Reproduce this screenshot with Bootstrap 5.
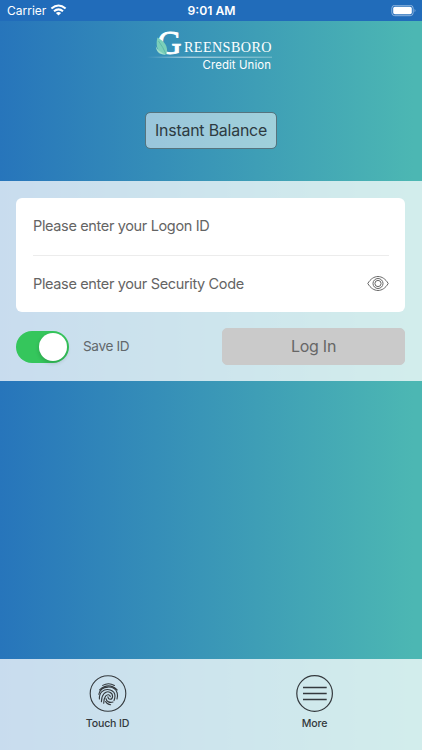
<!DOCTYPE html>
<html lang="en">
<head>
    <meta charset="UTF-8">
    <meta name="viewport" content="width=device-width, initial-scale=1.0">
    <title>Greensboro Credit Union</title>
    <!-- Bootstrap CSS -->
    <link href="https://cdn.jsdelivr.net/npm/bootstrap@5.3.0/dist/css/bootstrap.min.css" rel="stylesheet">
    <style>
        body {
            font-family: Inter, "Liberation Sans", sans-serif;
            background: linear-gradient(90deg, #2775bb 0%, #4cb7b3 98%);
            color: #3c4246;
            overflow: hidden;
        }

        svg {
            display: block;
            flex: none;
        }

        .status-bar {
            height: 21px;
            background: #216cba;
            font-size: 12px;
            line-height: 21px;
            padding: 0 6px 0 7px;
        }

        .status-side {
            flex: 1 1 0;
        }

        .clock {
            font-size: 12.2px;
        }

        .brand-header {
            height: 160px;
            padding-top: 1px;
        }

        .btn-balance {
            --bs-btn-color: #2d3a41;
            --bs-btn-bg: rgba(255, 255, 255, .5);
            --bs-btn-border-color: #56747e;
            --bs-btn-border-radius: 5px;
            width: 132px;
            height: 37px;
            padding: 0;
            margin-top: 41px;
            font-size: 15.9px;
            letter-spacing: -.2px;
            background-clip: padding-box;
        }

        .frost {
            background: rgba(255, 255, 255, .75);
        }

        .login-panel {
            height: 200px;
            padding: 16.5px 17px 16.5px 16px;
        }

        .field-box {
            height: 114px;
            border-radius: 6px;
            padding: 0 16px 0 17px;
            color: #646464;
            font-size: 14.5px;
            letter-spacing: -.35px;
        }

        .field-row {
            height: 57px;
        }

        .field-row + .field-row {
            border-top: 1px solid #ececec;
        }

        .save-switch {
            width: 53px;
            height: 32px;
            border-radius: 16px;
            padding: 2px;
            margin-top: 1px;
            background: #35c65c;
        }

        .save-knob {
            width: 28px;
            height: 28px;
            box-shadow: 0 2px 4px rgba(0, 0, 0, .18);
        }

        .save-label {
            margin-left: 14px;
            color: #62686c;
            font-size: 13.6px;
            letter-spacing: -.35px;
        }

        .btn-login {
            --bs-btn-disabled-color: #666;
            --bs-btn-disabled-bg: #cacaca;
            --bs-btn-disabled-border-color: #cacaca;
            --bs-btn-disabled-opacity: 1;
            --bs-btn-border-radius: 5px;
            width: 183px;
            height: 37px;
            padding: 0;
            font-size: 16px;
            letter-spacing: -.25px;
        }

        .tab-bar {
            height: 91px;
            padding: 16px 4px 0 4px;
        }

        .tab-item {
            color: #34393d;
            font-size: 10.6px;
            font-weight: 500;
            line-height: 14px;
            letter-spacing: -.15px;
        }

        .tab-item span {
            margin-top: 4px;
        }
    </style>
</head>
<body class="d-flex flex-column vh-100">
    <div class="status-bar d-flex text-white">
        <div class="status-side d-flex align-items-center">
            <span>Carrier</span>
            <svg class="ms-1" width="17" height="13" viewBox="0 0 17 13" fill="none" stroke="#fff" stroke-width="2.1">
                <path d="M1.4 4.5Q8.5-1.5 15.6 4.5M4 7.2Q8.5 3.6 13 7.2"/>
                <path d="M5.9 9Q8.5 7.2 11.1 9L8.5 11.6Z" fill="#fff" stroke="none"/>
            </svg>
        </div>
        <span class="clock fw-semibold">9:01 AM</span>
        <div class="status-side d-flex align-items-center justify-content-end">
            <svg width="26" height="12" viewBox="0 0 26 12">
                <rect x="1.8" y=".3" width="21.4" height="10.4" rx="3" fill="none" stroke="#8db4de"/>
                <rect x="3.2" y="1.8" width="18.6" height="7.4" rx="1.6" fill="#fff"/>
                <path d="M24.6 3.7Q26.2 5.5 24.6 7.3Z" fill="#8db4de"/>
            </svg>
        </div>
    </div>

    <header class="brand-header d-flex flex-column align-items-center">
        <svg width="130" height="49" viewBox="0 -8 130 49" fill="#fff">
            <defs>
                <linearGradient id="rule">
                    <stop offset="0" stop-color="#fff" stop-opacity="0"/>
                    <stop offset=".35" stop-color="#fff" stop-opacity=".75"/>
                    <stop offset="1" stop-color="#fff" stop-opacity=".35"/>
                </linearGradient>
            </defs>
            <text x="11.5" y="24" font-family="Liberation Serif, serif" font-size="33" textLength="24" lengthAdjust="spacingAndGlyphs" stroke="#fff" stroke-width=".9">G</text>
            <text x="38" y="22.3" font-family="Liberation Serif, serif" font-size="14.2" textLength="87.500" lengthAdjust="spacing">REENSBORO</text>
            <!-- leaf over the G -->
            <path d="M11.4 7.5C18 11 23 16.5 20.3 24.6C13 24 8.8 18 11.4 7.5Z" fill="#7bcfb9"/>
            <path d="M9.8 16C11.5 20 14 22 20 24.6C14 25 10.2 22 9.8 16Z" fill="#a2e0cb"/>
            <path d="M12.5 11Q17 17 20 24" fill="none" stroke="#4ba99f" stroke-width=".6"/>
            <rect x="1" y="26.7" width="125" height="1" fill="url(#rule)"/>
            <text x="56.5" y="38.9" font-family="Inter, sans-serif" font-size="11.4" textLength="68.5" lengthAdjust="spacing">Credit Union</text>
        </svg>
        <button type="button" class="btn btn-balance">Instant Balance</button>
    </header>

    <main class="login-panel frost">
        <div class="field-box bg-white">
            <div class="field-row d-flex align-items-center">Please enter your Logon ID</div>
            <div class="field-row d-flex align-items-center justify-content-between">
                <span>Please enter your Security Code</span>
                <svg width="22" height="18" viewBox="0 0 22 18" fill="none" stroke="#666">
                    <path d="M.8 8.5C6.2-.8 15.8-.8 21.2 8.5C15.8 17.8 6.2 17.8 .8 8.5Z"/>
                    <circle cx="11" cy="8.5" r="5"/>
                    <circle cx="11" cy="8.5" r="3.1"/>
                </svg>
            </div>
        </div>
        <div class="d-flex align-items-center mt-3">
            <div class="save-switch d-flex justify-content-end" role="switch" aria-checked="true">
                <span class="save-knob rounded-circle bg-white"></span>
            </div>
            <span class="save-label">Save ID</span>
            <button type="button" class="btn btn-login ms-auto" disabled>Log In</button>
        </div>
    </main>

    <nav class="tab-bar frost d-flex mt-auto">
        <div class="tab-item flex-fill w-50 d-flex flex-column align-items-center">
            <svg width="38" height="38" viewBox="0 0 38 38" fill="none" stroke="#34393d" stroke-width="1.1" stroke-linecap="round">
                <circle cx="19" cy="18.5" r="17.8"/>
                <path d="M13.7 10.4Q19.5 7 25.4 10.4"/>
                <path d="M10.6 14.8Q19.5 6.8 28.2 14.8"/>
                <path d="M9.8 19.3C12 9.9 25.8 9.9 28.2 18Q29 21.4 28 24"/>
                <path d="M10.4 24C10.2 20.6 11.4 18.2 13 16.7C17.8 12.3 26 15 26 21Q25.9 23.5 25 25.6"/>
                <path d="M12.4 26.8C12.4 23 13.3 20.5 15.1 18.5C18.8 15 23.7 17.6 23.6 21.4C23.3 25.2 19.2 25.2 18.9 21.8"/>
                <path d="M14.7 28.3Q14.6 23.8 16.6 21.1C18.3 19 21 19.4 21.3 21.6"/>
                <path d="M17 23.6C17.4 26.8 20.8 28 24 27M16.6 26.6Q18.2 29.7 21.6 29.7"/>
            </svg>
            <span>Touch ID</span>
        </div>
        <div class="tab-item flex-fill w-50 d-flex flex-column align-items-center">
            <svg width="38" height="38" viewBox="0 0 38 38" fill="none" stroke="#34393d" stroke-width="1.2">
                <circle cx="18.6" cy="18.5" r="17.8"/>
                <path d="M7 12.5H30.7M7 18.5H30.7M7 24.5H30.7" stroke-width="1.3"/>
            </svg>
            <span>More</span>
        </div>
    </nav>

    <!-- Bootstrap JS and Popper.js -->
    <script src="https://cdn.jsdelivr.net/npm/bootstrap@5.3.0/dist/js/bootstrap.bundle.min.js"></script>
</body>
</html>
